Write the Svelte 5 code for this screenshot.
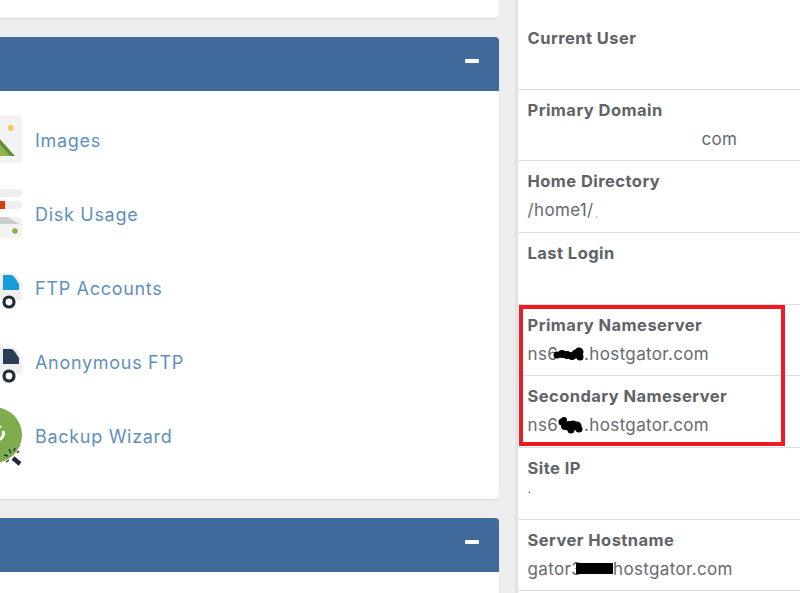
<script>
  const groupOne = ['Images', 'Disk Usage', 'FTP Accounts', 'Anonymous FTP', 'Backup Wizard'];
  // lumps of the pen scribbles over the redacted parts of the nameservers
  const scribOne = [[4, 9, 3.5], [9, 8, 4], [14, 9, 4], [19, 10, 4], [23, 8, 4.5], [26, 6, 4.5], [27, 11, 3.5]];
  const scribTwo = [[4, 5, 3.5], [7, 9, 4], [11, 9, 5], [15, 8, 4.5], [19, 9, 4.5], [21, 12, 3.5], [13, 13, 3.5], [6, 3, 3]];
</script>

<div class="page">
  <div class="main">
    <div class="panel-stub"></div>

    <section class="panel">
      <header class="panel-head"><span class="minus"></span></header>
      <ul class="items">
        {#each groupOne as name, i}
          <li class="item">
            <svg class="icon" viewBox="0 0 48 48" width="48" height="48">
              {#if i === 0}
                <rect y="-1" width="48" height="48" rx="4" fill="#f3f3f3" />
                <circle cx="36.7" cy="12" r="3" fill="#fbc35c" />
                <path d="M12 40 L25 22 L41 40Z" fill="#5f8f3a" />
                <path d="M0 40 L23 25 L36 40Z" fill="#8ab84f" />
              {:else if i === 1}
                <rect y="-1" width="48" height="8" rx="4" fill="#eeeeee" />
                <rect y="11" width="48" height="8" rx="4" fill="#eeeeee" />
                <rect y="11" x="10" width="21" height="8" fill="#d93c0b" />
                <rect y="27" width="48" height="21" rx="3" fill="#f3f3f3" />
                <path d="M10 27 H34 L45 34 H10Z" fill="#cccccc" />
                <circle cx="41" cy="41" r="2.8" fill="#83b14a" />
              {:else if i < 4}
                <path d="M10 9 H38 Q41 9 43 12 L48 19 V33 Q48 36 44 36 H10Z" fill="#efefef" />
                <path d="M29 11 H37 Q39 11 41 14 L45 20 V26 H29Z" fill={i === 2 ? '#169bdb' : '#2a3d55'} />
                <circle cx="35" cy="38" r="5" fill="#fff" stroke="#1f2d3a" stroke-width="3.2" />
              {:else}
                <circle cx="20" cy="23" r="28" fill="#7fad4d" />
                <path d="M29 19 A6.5 6.5 0 1 1 23 15" fill="none" stroke="#fff" stroke-width="3" />
                <path d="M24 11 L28 15 L23 18" fill="#fff" />
                <path d="M39 46 L46 52" stroke="#1f2d3a" stroke-width="4.5" />
                <path d="M37 41 L35 37 M34 44 L30 43 M40 39 L41 36 M35 48 L32 50 M43 41 L45 39" stroke="#1f2d3a" stroke-width="1.4" />
              {/if}
            </svg>
            <a class="item-link" href="#{name}">{name}</a>
          </li>
        {/each}
      </ul>
    </section>

    <section class="panel">
      <header class="panel-head"><span class="minus"></span></header>
      <div class="panel-rest"></div>
    </section>
  </div>

  <aside class="side">
    <div class="row"><div class="label">Current User</div></div>
    <div class="row">
      <div class="label">Primary Domain</div>
      <div class="value domain">com</div>
    </div>
    <div class="row">
      <div class="label">Home Directory</div>
      <div class="value">/home1/<span class="cut"></span></div>
    </div>
    <div class="row"><div class="label">Last Login</div></div>
    <div class="row">
      <div class="label">Primary Nameserver</div>
      <div class="value">ns6<svg class="scrib one" width="31" height="16" viewBox="0 0 31 16">{#each scribOne as [x, y, r]}<circle cx={x} cy={y} {r} />{/each}</svg>.hostgator.com</div>
    </div>
    <div class="row">
      <div class="label">Secondary Nameserver</div>
      <div class="value">ns6<svg class="scrib two" width="26" height="17" viewBox="0 0 26 17">{#each scribTwo as [x, y, r]}<circle cx={x} cy={y} {r} />{/each}</svg>.hostgator.com</div>
    </div>
    <div class="row">
      <div class="label">Site IP</div>
      <div class="value dot">.</div>
    </div>
    <div class="row">
      <div class="label">Server Hostname</div>
      <div class="value">gator3<span class="black"></span>hostgator.com</div>
    </div>
  </aside>

  <div class="highlight"></div>
</div>

<style>
  :global(body) {
    margin: 0;
    background: #eeeeee;
  }

  .page {
    position: relative;
    display: flex;
    height: 593px;
    overflow: hidden;
    font-family: Inter, "Open Sans", sans-serif;
  }

  .main {
    flex: 0 0 499px;
    display: flex;
    flex-direction: column;
    gap: 19px;
    margin-right: 16px;
  }

  .panel-stub {
    flex: none;
    height: 18px;
    background: #fff;
    border-radius: 0 0 4px 0;
    box-shadow: 0 1px 1px #d8d8d8;
  }

  .panel {
    flex: none;
    background: #fff;
    border-radius: 0 4px 4px 0;
    box-shadow: 0 1px 1px #d4d4d4;
  }

  .panel-head {
    display: flex;
    justify-content: flex-end;
    align-items: center;
    height: 54px;
    padding-right: 20px;
    background: #406a9c;
    border-radius: 0 4px 0 0;
    box-sizing: border-box;
  }

  .minus {
    width: 14px;
    height: 4px;
    margin-bottom: 7px;
    background: #fff;
    border-radius: 1px;
  }

  .items {
    list-style: none;
    margin: 0;
    padding: 25px 0 39px;
    display: flex;
    flex-direction: column;
    gap: 26px;
  }

  .item {
    display: flex;
    align-items: center;
    gap: 13px;
    margin-left: -26px;
    height: 48px;
  }

  .icon {
    flex: none;
    overflow: visible;
  }

  .item-link {
    color: #5f8fbd;
    font-size: 18px;
    letter-spacing: 0.7px;
    text-decoration: none;
  }

  .panel-rest {
    height: 40px;
  }

  .side {
    flex: 1;
    background: #fff;
    border-left: 3px solid #e3e3e3;
  }

  .row {
    box-sizing: border-box;
    height: 71.7px;
    padding: 8px 10px 0 9.5px;
    border-bottom: 1px solid #dedede;
    color: #666a70;
  }

  .row:first-child {
    height: 89.5px;
    padding-top: 26px;
  }

  .label {
    font-size: 16.5px;
    font-weight: 700;
    letter-spacing: 0.45px;
    line-height: 24px;
    color: #5f6368;
  }

  .value {
    display: flex;
    align-items: center;
    margin-top: 5px;
    font-size: 17px;
    letter-spacing: 0.35px;
    line-height: 24px;
    white-space: nowrap;
  }

  .domain {
    padding-left: 174px;
  }

  .dot {
    margin-top: -3px;
    font-size: 12px;
  }

  .scrib {
    flex: none;
    fill: #000;
  }

  .one {
    margin-left: -5px;
  }

  .two {
    margin-left: 0;
  }

  .cut {
    align-self: flex-end;
    width: 1px;
    height: 2px;
    margin: 0 0 4px 2px;
    background: #b8b8b8;
  }

  .black {
    display: inline-block;
    width: 37px;
    height: 11px;
    margin-left: -6px;
    background: #000;
  }

  .highlight {
    position: absolute;
    left: 519px;
    top: 305px;
    width: 258px;
    height: 133px;
    border: 4px solid #ed1c24;
  }
</style>
